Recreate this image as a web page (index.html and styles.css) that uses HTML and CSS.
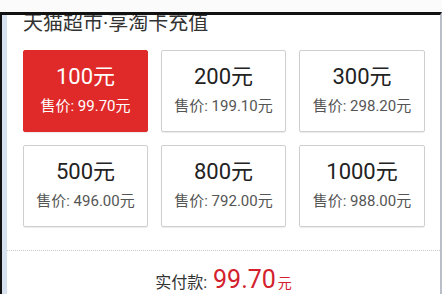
FILE: index.html
```html
<!DOCTYPE html>
<html lang="zh">
<head>
<meta charset="utf-8">
<link rel="stylesheet" href="styles.css">
</head>
<body>
<div class="top-gap"></div>
<div class="window">
  <div class="strip"></div>
  <div class="content">
    <h1 class="title">天猫超市·享淘卡充值</h1>
    <div class="grid">
      <div class="card selected"><div class="amount">100元</div><div class="price">售价: 99.70元</div></div>
      <div class="card"><div class="amount">200元</div><div class="price">售价: 199.10元</div></div>
      <div class="card"><div class="amount">300元</div><div class="price">售价: 298.20元</div></div>
      <div class="card"><div class="amount">500元</div><div class="price">售价: 496.00元</div></div>
      <div class="card"><div class="amount">800元</div><div class="price">售价: 792.00元</div></div>
      <div class="card"><div class="amount">1000元</div><div class="price">售价: 988.00元</div></div>
    </div>
    <div class="divider"></div>
    <div class="total"><span class="label">实付款:</span><span class="sum">99.70</span><span class="unit">元</span></div>
  </div>
</div>
</body>
</html>
```
FILE: styles.css
```css
html, body {
  margin: 0;
  padding: 0;
  background: #fff;
  width: 442px;
  height: 294px;
  overflow: hidden;
  font-family: Roboto, "Noto Sans CJK SC", sans-serif;
}
.top-gap {
  height: 12px;
  background: #fbfbfb;
}
.window {
  display: flex;
  height: 279px;
  border-top: 3px solid #111;
  border-left: 2px solid #111;
  border-right: 2px solid #b9bec8;
  background: #fff;
}
.strip {
  width: 5px;
  flex: none;
  background: #d6e1f0;
}
.content {
  flex: 1;
  overflow: hidden;
}
.title {
  margin: -2px 0 0 16px;
  font-size: 20px;
  line-height: 20px;
  font-weight: normal;
  color: #333;
  font-family: Roboto, "Noto Sans CJK SC", sans-serif;
}
.grid {
  display: grid;
  grid-template-columns: 125px 125px 126px;
  grid-auto-rows: 82px;
  gap: 13px;
  margin: 17px 0 0 16px;
}
.card {
  box-sizing: border-box;
  border: 1px solid #cfcfcf;
  border-radius: 2px;
  box-shadow: 0 1px 1px rgba(0,0,0,0.08);
  display: flex;
  flex-direction: column;
  align-items: center;
  padding-top: 13px;
  color: #222;
}
.card.selected {
  background: #e02a2a;
  border-color: #e02a2a;
  color: #fff;
}
.amount {
  font-size: 22px;
  line-height: 26px;
}
.price {
  margin-top: 7px;
  font-size: 15px;
  line-height: 18px;
  color: #555;
}
.selected .price {
  color: #fff;
}
.divider {
  margin-top: 23px;
  border-top: 1px dotted #c8c8c8;
}
.total {
  display: flex;
  justify-content: center;
  align-items: baseline;
  padding-top: 14px;
  line-height: 30px;
}
.label {
  font-size: 16px;
  color: #333;
  margin-right: 6px;
}
.sum {
  font-size: 25px;
  color: #d3212d;
}
.unit {
  font-size: 14px;
  color: #d3212d;
  margin-left: 2px;
}
```
